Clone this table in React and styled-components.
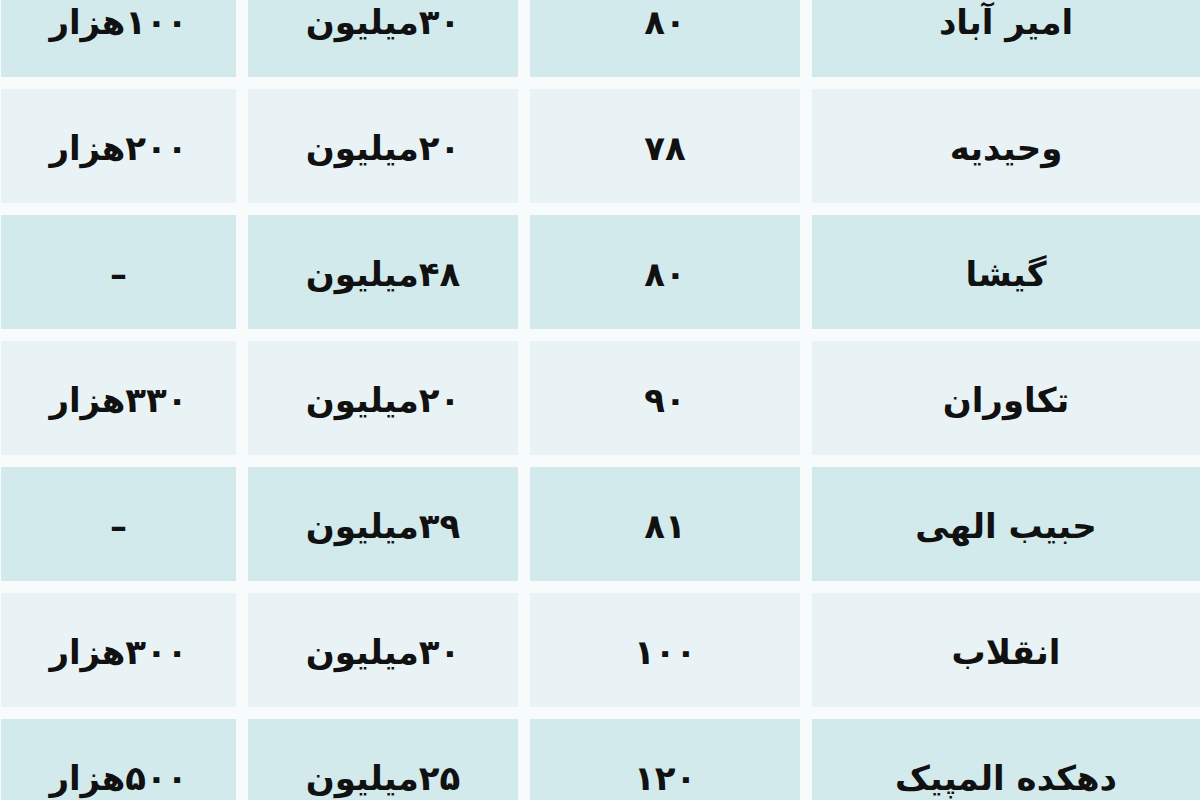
import React from 'react';
import styled, { createGlobalStyle } from 'styled-components';

const GlobalStyle = createGlobalStyle`
  html, body {
    margin: 0;
    padding: 0;
    background: #f7fbfc;
    overflow: hidden;
  }
`;

const Page = styled.div`
  width: 1200px;
  height: 800px;
  overflow: hidden;
  background: #f7fbfc;
`;

const Table = styled.div`
  direction: rtl;
  display: grid;
  grid-template-columns: 388px 270px 270px 235px;
  grid-auto-rows: 114px;
  column-gap: 12px;
  row-gap: 12px;
  margin-top: -37px;
  font-family: "DejaVu Sans", "Noto Sans", sans-serif;
`;

const Cell = styled.div`
  display: flex;
  align-items: center;
  justify-content: center;
  background: ${({ $shaded }) => ($shaded ? '#d3eaed' : '#e9f3f5')};
  color: #111;
  font-size: 34px;
  font-weight: 700;
  padding-top: 4px;
  box-sizing: border-box;
`;

const rows = [
  ['امیر آباد', '۸۰', '۳۰میلیون', '۱۰۰هزار'],
  ['وحیدیه', '۷۸', '۲۰میلیون', '۲۰۰هزار'],
  ['گیشا', '۸۰', '۴۸میلیون', '–'],
  ['تکاوران', '۹۰', '۲۰میلیون', '۳۳۰هزار'],
  ['حبیب الهی', '۸۱', '۳۹میلیون', '–'],
  ['انقلاب', '۱۰۰', '۳۰میلیون', '۳۰۰هزار'],
  ['دهکده المپیک', '۱۲۰', '۲۵میلیون', '۵۰۰هزار'],
];

const App = () => (
  <Page>
    <GlobalStyle />
    <Table>
      {rows.map((row, i) =>
        row.map((text, j) => (
          <Cell key={`${i}-${j}`} $shaded={i % 2 === 0}>
            {text}
          </Cell>
        ))
      )}
    </Table>
  </Page>
);

export default App;
